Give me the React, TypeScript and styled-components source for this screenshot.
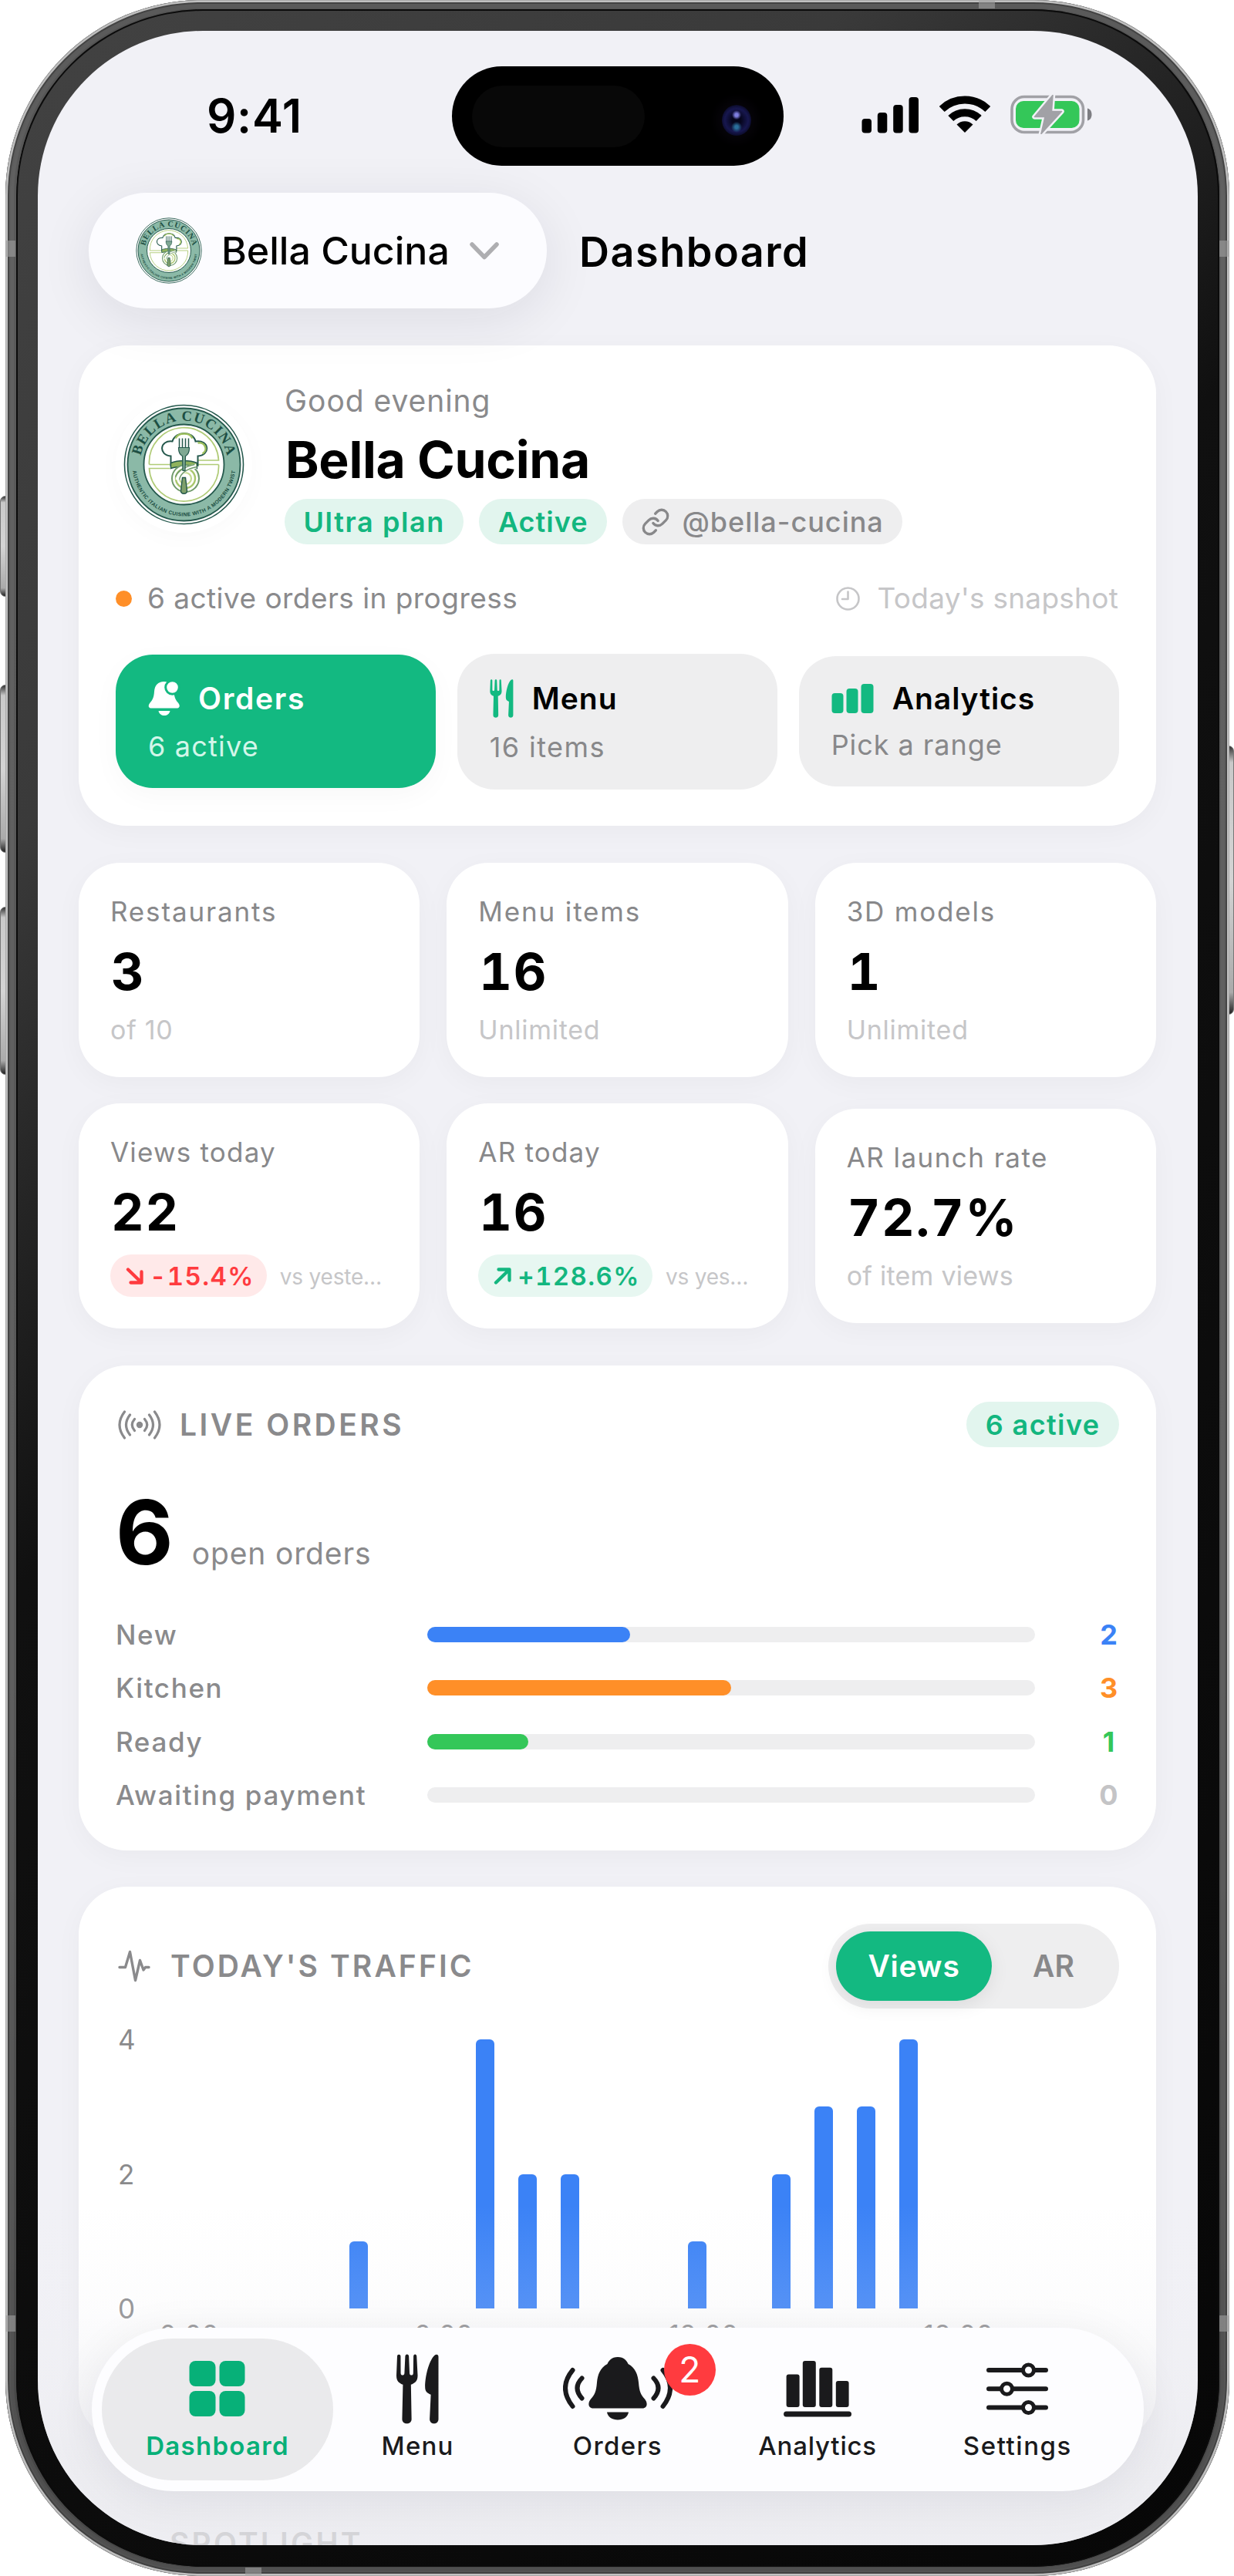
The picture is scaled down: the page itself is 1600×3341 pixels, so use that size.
import { useId } from "react";
import { Link } from "lucide-react";
import styled, { createGlobalStyle, css } from "styled-components";

interface Stat {
  label: string;
  value: string;
  note: string;
  delta?: string;
  up?: boolean;
  labelSpacing?: number;
  noteSpacing?: number;
}

const stats: Stat[] = [
  { label: "Restaurants", value: "3", note: "of 10", labelSpacing: 1.85 },
  { label: "Menu items", value: "16", note: "Unlimited", labelSpacing: 1.85 },
  { label: "3D models", value: "1", note: "Unlimited", labelSpacing: 1.8 },
  { label: "Views today", value: "22", note: "vs yeste…", delta: "-15.4%", labelSpacing: 1.2 },
  { label: "AR today", value: "16", note: "vs yes…", delta: "+128.6%", up: true, labelSpacing: 1.2 },
  { label: "AR launch rate", value: "72.7%", note: "of item views", labelSpacing: 1.45, noteSpacing: 0.25 },
];

const queue = [
  { label: "New", count: 2, color: "#3b82f6" },
  { label: "Kitchen", count: 3, color: "#ff8f28" },
  { label: "Ready", count: 1, color: "#34c759" },
  { label: "Awaiting payment", count: 0, color: "#c4c4c6" },
];

const openOrders = 6;

const hourlyViews = [0, 0, 0, 0, 1, 0, 0, 4, 2, 2, 0, 0, 1, 0, 2, 3, 3, 4, 0, 0, 0, 0];
const hourLabels = ["0:00", "6:00", "12:00", "18:00"];

const App = () => {
  return (
    <>
      <GlobalStyle />
      <Stage>
        <SideButton $top={643} $height={131} />
        <SideButton $top={888} $height={218} />
        <SideButton $top={1176} $height={218} />
        <SideButton $top={967} $height={349} $right />

        <Frame>
          <Bezel>
            <Screen>
              <StatusBar>
                <Clock>9:41</Clock>
                <Island>
                  <Speaker />
                  <Lens />
                </Island>
                <StatusIcons>
                  <SignalIcon />
                  <WifiIcon />
                  <BatteryIcon />
                </StatusIcons>
              </StatusBar>

              <Header>
                <Switcher>
                  <Logo size={86} />
                  <SwitcherName>Bella Cucina</SwitcherName>
                  <svg width="38" height="23" viewBox="0 0 38 23" fill="none">
                    <path d="M3 3l16 16.500L35 3" stroke="#aeaeb1" strokeWidth="5.500" strokeLinecap="round" strokeLinejoin="round" />
                  </svg>
                </Switcher>
                <Title>Dashboard</Title>
              </Header>

              <Content>
                <Hero>
                  <HeroTop>
                    <Avatar>
                      <Logo size={157} />
                    </Avatar>
                    <div>
                      <Greeting>Good evening</Greeting>
                      <Name>Bella Cucina</Name>
                      <Pills>
                        <Pill $spacing={1.6}>Ultra plan</Pill>
                        <Pill $spacing={1}>Active</Pill>
                        <Pill $muted $spacing={1}>
                          <Link size={38} strokeWidth={2.1} />
                          @bella-cucina
                        </Pill>
                      </Pills>
                    </div>
                  </HeroTop>

                  <Snapshot>
                    <Progress>
                      <Dot />6 active orders in progress
                    </Progress>
                    <Today>
                      <svg width="31" height="31" viewBox="0 0 31 31" fill="none" stroke="currentColor" strokeWidth="2.600">
                        <circle cx="15.500" cy="15.500" r="14" />
                        <path d="M15.500 6.500V16H8" strokeLinecap="round" strokeLinejoin="round" />
                      </svg>
                      Today's snapshot
                    </Today>
                  </Snapshot>

                  <Tiles>
                    <Tile $active>
                      <TileHead $height={50} $gap={23} $spacing={1.7}>
                        <BellBadgeIcon />
                        Orders
                      </TileHead>
                      <TileNote $spacing={1.2}>6 active</TileNote>
                    </Tile>
                    <Tile>
                      <TileHead $height={53} $gap={24} $spacing={1}>
                        <CutleryIcon width={31} height={50} />
                        Menu
                      </TileHead>
                      <TileNote $spacing={1.4}>16 items</TileNote>
                    </Tile>
                    <Tile>
                      <TileHead $height={46.5} $gap={24} $spacing={0.95}>
                        <svg width="55" height="38" viewBox="0 0 55 38" fill="currentColor">
                          <rect x="0.500" y="12" width="15" height="26" rx="4" />
                          <rect x="19.500" y="6" width="15" height="32" rx="4" />
                          <rect x="38.500" width="16" height="38" rx="4" />
                        </svg>
                        Analytics
                      </TileHead>
                      <TileNote $spacing={0.95}>Pick a range</TileNote>
                    </Tile>
                  </Tiles>
                </Hero>

                <StatGrid>
                  {stats.map((stat) => (
                    <StatCard key={stat.label} {...stat} />
                  ))}
                </StatGrid>

                <LiveCard>
                  <CardHead>
                    <CardTitle $gap={24} $spacing={3.5}>
                      <BroadcastIcon />
                      LIVE ORDERS
                    </CardTitle>
                    <Pill $spacing={1.4}>6 active</Pill>
                  </CardHead>
                  <Total>
                    <TotalValue>{openOrders}</TotalValue>
                    <TotalLabel>open orders</TotalLabel>
                  </Total>
                  <Queue>
                    {queue.map(({ label, count, color }) => (
                      <QueueRow key={label}>
                        <span>{label}</span>
                        <Track>
                          <Fill style={{ width: `${(count / openOrders) * 100}%`, background: color }} />
                        </Track>
                        <Count $color={color}>{count}</Count>
                      </QueueRow>
                    ))}
                  </Queue>
                </LiveCard>

                <TrafficCard>
                  <CardHead>
                    <CardTitle $gap={26} $spacing={3.1}>
                      <svg width="42" height="42" viewBox="0 0 42 42" fill="none" stroke="currentColor" strokeWidth="3.400" strokeLinecap="round" strokeLinejoin="round">
                        <path d="M2 22.500h7.500L15.500 2.500l7 37 6-26L33 26l2.500-3.500H40" />
                      </svg>
                      TODAY'S TRAFFIC
                    </CardTitle>
                    <Segments>
                      <Segment $active>Views</Segment>
                      <Segment>AR</Segment>
                    </Segments>
                  </CardHead>
                  <Chart>
                    <YAxis>
                      <span>4</span>
                      <span>2</span>
                      <span>0</span>
                    </YAxis>
                    <Plot>
                      {hourlyViews.map((views, hour) => (
                        <Bar key={hour} style={{ height: views * 87.25 }} />
                      ))}
                    </Plot>
                  </Chart>
                  <XAxis>
                    {hourLabels.map((label) => (
                      <span key={label}>{label}</span>
                    ))}
                  </XAxis>
                </TrafficCard>

                <SectionTitle>SPOTLIGHT</SectionTitle>
              </Content>

              <Fade />

              <TabBar>
                <Tab $active>
                  <TabIcon>
                    <svg width="74" height="72" viewBox="0 0 74 72" fill="currentColor">
                      <rect x="0.500" width="34" height="33" rx="8" />
                      <rect x="39.500" width="33" height="33" rx="8" />
                      <rect x="0.500" y="39" width="34" height="33" rx="8" />
                      <rect x="39.500" y="39" width="33" height="33" rx="8" />
                    </svg>
                  </TabIcon>
                  <TabLabel $spacing={1.3}>Dashboard</TabLabel>
                </Tab>
                <Tab>
                  <TabIcon>
                    <CutleryIcon width={55} height={91} />
                  </TabIcon>
                  <TabLabel $spacing={1.2}>Menu</TabLabel>
                </Tab>
                <Tab>
                  <TabIcon>
                    <RingingBellIcon />
                    <Badge>2</Badge>
                  </TabIcon>
                  <TabLabel $spacing={1.4}>Orders</TabLabel>
                </Tab>
                <Tab>
                  <TabIcon>
                    <svg width="88" height="73" viewBox="0 0 88 73" fill="currentColor">
                      <rect x="3.600" y="17.500" width="17" height="42.500" rx="3" />
                      <rect x="24.800" width="17" height="60" rx="3" />
                      <rect x="46.300" y="8.700" width="17" height="51.300" rx="3" />
                      <rect x="67.800" y="26" width="16.800" height="34" rx="3" />
                      <rect y="65.500" width="88" height="7" rx="3.500" />
                    </svg>
                  </TabIcon>
                  <TabLabel $spacing={0.8}>Analytics</TabLabel>
                </Tab>
                <Tab>
                  <TabIcon>
                    <SlidersIcon />
                  </TabIcon>
                  <TabLabel $spacing={1.55}>Settings</TabLabel>
                </Tab>
              </TabBar>
            </Screen>
          </Bezel>
        </Frame>

        <AntennaBand $x={7} $y={312} />
        <AntennaBand $x={1581} $y={312} />
        <AntennaBand $x={7} $y={3003} />
        <AntennaBand $x={1581} $y={3003} />
        <AntennaBand $x={1269} $y={1} $flat />
        <AntennaBand $x={318} $y={3330} $flat />
      </Stage>
    </>
  );
};

const StatCard = ({ label, value, note, delta, up, labelSpacing = 1, noteSpacing = 0.75 }: Stat) => {
  return (
    <StatBox>
      <StatLabel $spacing={labelSpacing}>{label}</StatLabel>
      <StatValue>{value}</StatValue>
      {delta ? (
        <DeltaRow>
          <Delta $up={up}>
            <svg width="23" height="22" viewBox="0 0 23 22" fill="none" stroke="currentColor" strokeWidth="4.300" strokeLinecap="round" strokeLinejoin="round">
              {up ? <path d="M3 19.500L20 3M6.500 2.500H20.500V16.500" /> : <path d="M3 2.500L20 19M20.500 5.500V19.500H6.500" />}
            </svg>
            {delta}
          </Delta>
          <DeltaNote>{note}</DeltaNote>
        </DeltaRow>
      ) : (
        <StatNote $spacing={noteSpacing}>{note}</StatNote>
      )}
    </StatBox>
  );
};

const Logo = ({ size }: { size: number }) => {
  const id = useId();
  return (
    <svg width={size} height={size} viewBox="-78.500 -78.500 157 157" fill="none">
      <defs>
        <path id={`${id}top`} d="M-57 0A57 57 0 0 1 57 0" />
        <path id={`${id}bottom`} d="M-67 0A67 67 0 0 0 67 0" />
      </defs>
      <circle r="77" fill="#fff" stroke="#24584c" strokeWidth="1.600" />
      <circle r="73" fill="#8bb9a7" stroke="#24584c" strokeWidth="1.800" />
      <circle r="52" fill="#fff" stroke="#24584c" strokeWidth="1.800" />
      <g stroke="#b0cb77" strokeWidth="1.700">
        <path d="M-45 0A45 45 0 0 1 45 -5.500H18M-45 0H-18" />
        <path d="M45 0A45 45 0 0 1 -45 5H-18M45 0H18" />
      </g>
      <text fill="#1d4f43" fontFamily="Liberation Serif, serif" fontWeight="700" fontSize="18.500" textAnchor="middle">
        <textPath href={`#${id}top`} startOffset="50%" textLength="156">
          BELLA CUCINA
        </textPath>
      </text>
      <text fill="#1d4f43" fontFamily="Liberation Sans, sans-serif" fontWeight="700" fontSize="6.800" textAnchor="middle">
        <textPath href={`#${id}bottom`} startOffset="50%" textLength="194">
          AUTHENTIC ITALIAN CUISINE WITH A MODERN TWIST
        </textPath>
      </text>
      {/* chef hat */}
      <path
        d="M-17 -11C-33 -12 -32 -32 -15 -30C-11 -44 12 -44 15 -30C33 -33 35 -12 18 -11V1C8 -3 -8 -3 -17 1Z"
        fill="#fff"
        stroke="#24584c"
        strokeWidth="2"
      />
      <path d="M-11 -34C-7 -42 8 -42 11 -34M18 -28C27 -30 32 -19 24 -14" stroke="#9dbf5e" strokeWidth="2.500" />
      <path d="M-17 -2C-8 -6 8 -6 17 -2V5C8 2 -8 2 -17 5Z" fill="#8fb25c" stroke="#24584c" strokeWidth="1.400" />
      {/* pasta twist */}
      <circle cx="2" cy="18" r="17.500" fill="#fff" stroke="#6f9a6a" strokeWidth="2" />
      <circle cx="2" cy="18" r="12.500" stroke="#a8c66c" strokeWidth="2.400" />
      <circle cx="2" cy="18" r="7.500" stroke="#c3d98f" strokeWidth="2.200" />
      <path d="M16 2C4 4 -6 10 -8 20" stroke="#fff" strokeWidth="6" />
      <path d="M17 3C5 5 -5 11 -6 20M14 0C2 2 -8 8 -11 16" stroke="#6f9a6a" strokeWidth="1.500" />
      {/* fork */}
      <path d="M-6 -34V-20M-2 -34V-20M2 -34V-20M6 -34V-20" stroke="#24584c" strokeWidth="1.500" />
      <path d="M-7 -22H7C7 -15 4 -12 2 -11L1.500 8H-1.500L-2 -11C-4 -12 -7 -15 -7 -22Z" fill="#7fa893" stroke="#24584c" strokeWidth="1.200" />
      <path d="M-2 17H2L4 34C4 39 -4 39 -4 34Z" fill="#7fa06b" stroke="#24584c" strokeWidth="1.400" />
    </svg>
  );
};

const SignalIcon = () => (
  <svg width="75" height="48" viewBox="0 0 75 48" fill="#000">
    <rect x="0.500" y="29" width="12.500" height="18.500" rx="4" />
    <rect x="20.800" y="21" width="12.500" height="26.500" rx="4" />
    <rect x="41.200" y="11" width="12.500" height="36.500" rx="4" />
    <rect x="61.500" y="1" width="12.500" height="46.500" rx="4" />
  </svg>
);

const WifiIcon = () => (
  <svg width="66" height="49" viewBox="0 0 66 49" fill="none" stroke="#000" strokeWidth="10">
    <path d="M3.200 17.500A43.200 43.200 0 0 1 62.800 17.500" />
    <path d="M14.800 29.500A26.300 26.300 0 0 1 51.200 29.500" />
    <path d="M33 48L22.500 37.500A15 15 0 0 1 43.500 37.500Z" fill="#000" stroke="none" />
  </svg>
);

const BatteryIcon = () => (
  <svg width="106" height="51" viewBox="0 0 106 51" fill="none">
    <rect x="2" y="2.500" width="92.500" height="46" rx="16" stroke="#a1a1a6" strokeWidth="3.600" />
    <rect x="7" y="8" width="82.500" height="35" rx="10" fill="#34c759" />
    <path d="M100 17.500C104 18.500 105.500 22 105.500 25.500S104 32.500 100 33.500Z" fill="#7d7d82" />
    <path d="M55 0.500L31.500 28.500H45L40 50.500L66.500 21.500H53.500Z" fill="#a1a1a6" stroke="#f1f1f6" strokeWidth="6.500" strokeLinejoin="round" />
    <path d="M55 0.500L31.500 28.500H45L40 50.500L66.500 21.500H53.500Z" fill="#a1a1a6" stroke="#a1a1a6" strokeWidth="1.500" strokeLinejoin="round" />
  </svg>
);

const BellBadgeIcon = () => (
  <svg width="42" height="45" viewBox="0 0 42 45" fill="#fff">
    <path d="M20.500 1C13 1 8.500 6 8 14C7.500 22 5.500 25 2.500 28.500C0 31.500 0 35 3.500 35.500H38C41.500 35 41.500 31.500 39 28.500C36 25 34 22 33.500 14C33 6 28 1 20.500 1Z" />
    <path d="M13.500 39H28.500C27.500 43 24.500 45 21 45S14.500 43 13.500 39Z" />
    <circle cx="31.500" cy="8.500" r="8.800" fill="#fff" stroke="#13b981" strokeWidth="3" />
  </svg>
);

const CutleryIcon = ({ width, height }: { width: number; height: number }) => (
  <svg width={width} height={height} viewBox="0 0 55.500 91.500" fill="currentColor">
    <path d="M3.200 0.500C1.500 0.500 1 2 1 3L0 28C0 36 4 38 8.500 40L7.500 85C7.500 93 19.800 93 19.800 85L19 40C23.500 38 27.800 36 27.800 28L26.500 3C26.500-0.500 22.300-0.500 22.300 3L22 25C22 28.500 17.300 28.500 17.200 25L16.300 3C16.300-0.500 11.500-0.500 11.500 3L10.500 25C10.300 28.500 5.700 28.500 5.600 25L5.500 3C5.500 1.500 5 0.500 3.200 0.500Z" />
    <path d="M55 3.500C55 0 52 0 50 1.500C42 9 37.500 30 37.500 43C37.500 49 40 51 45 53L43.500 85C43.500 93 55 93 55 85Z" />
  </svg>
);

const BroadcastIcon = () => (
  <svg width="56" height="38" viewBox="0 0 56 38" fill="none" stroke="currentColor" strokeWidth="3.200" strokeLinecap="round">
    <circle cx="28" cy="19" r="4.200" fill="currentColor" stroke="none" />
    <path d="M8.500 2Q-4.500 19 8.500 36M15.500 6Q5.500 19 15.500 32M21.500 11.500Q15 19 21.500 26.500" />
    <path d="M47.500 2Q60.500 19 47.500 36M40.500 6Q50.500 19 40.500 32M34.500 11.500Q41 19 34.500 26.500" />
  </svg>
);

const RingingBellIcon = () => (
  <svg width="142" height="82" viewBox="0 0 142 82" fill="currentColor">
    <path d="M71 0C79 0 83 5 84.500 9C94 14 97 23 98 33C99 45 101 49 106 54.500C110.500 60 109 66.500 103 66.500H39C33 66.500 31.500 60 36 54.500C41 49 43 45 44 33C45 23 48 14 57.500 9C59 5 63 0 71 0Z" />
    <path d="M57 71.500H85C84 78 78 81.500 71 81.500S58 78 57 71.500Z" />
    <g fill="none" stroke="currentColor" strokeWidth="6" strokeLinecap="round">
      <path d="M12.500 17Q-6.500 40 12.500 64M24.500 27.500Q12.500 40 24.500 53.500" />
      <path d="M129.500 17Q148.500 40 129.500 64M117.500 27.500Q129.500 40 117.500 53.500" />
    </g>
  </svg>
);

const SlidersIcon = () => (
  <svg width="80" height="68" viewBox="0 0 80 68" fill="#fdfdff" stroke="currentColor" strokeLinecap="round">
    <path d="M3 10H77M3 34.300H77M3 58.500H77" strokeWidth="6" />
    <g strokeWidth="5">
      <circle cx="54.500" cy="10" r="7" />
      <circle cx="26.500" cy="34.300" r="7" />
      <circle cx="54.500" cy="58.500" r="7" />
    </g>
  </svg>
);

const GlobalStyle = createGlobalStyle`
  * {
    box-sizing: border-box;
  }

  body {
    margin: 0;
    background: #fff;
    font-family: Inter, "Liberation Sans", sans-serif;
    color: #000;
  }

  svg {
    display: block;
    flex: none;
  }
`;

const Stage = styled.div`
  position: relative;
  width: 1600px;
  height: 3341px;
  padding: 0 6px 0 7px;
  overflow: hidden;
`;

const SideButton = styled.div<{ $top: number; $height: number; $right?: boolean }>`
  position: absolute;
  top: ${({ $top }) => $top}px;
  ${({ $right }) => ($right ? "right: 0;" : "left: 0;")}
  width: 14px;
  height: ${({ $height }) => $height}px;
  border-radius: 7px;
  background: linear-gradient(#333, #c9c9c9 6%, #d4d4d4 50%, #aaa 92%, #222);
  border: 1px solid #777;
`;

const AntennaBand = styled.div<{ $x: number; $y: number; $flat?: boolean }>`
  position: absolute;
  left: ${({ $x }) => $x}px;
  top: ${({ $y }) => $y}px;
  width: ${({ $flat }) => ($flat ? 21 : 13)}px;
  height: ${({ $flat }) => ($flat ? 10 : 21)}px;
  background: rgba(160, 160, 160, 0.6);
`;

const Frame = styled.div`
  position: relative;
  height: 3341px;
  padding: 12px 13px 12px 14px;
  border-radius: 254px;
  background: linear-gradient(#b4b4b4, #cdcdcd 8%, #c6c6c6 65%, #8e8e8e 96%);
  box-shadow:
    inset 0 0 0 1px rgba(0, 0, 0, 0.12),
    inset 0 0 0 3px rgba(225, 225, 225, 0.8),
    inset 0 0 0 5px rgba(60, 60, 60, 0.75),
    inset 0 0 0 7px rgba(90, 90, 90, 0.45),
    inset 0 0 0 11px rgba(255, 255, 255, 0.05),
    inset 0 0 0 14px rgba(40, 40, 40, 0.7);
`;

const Bezel = styled.div`
  height: 100%;
  padding: 28px;
  border-radius: 242px;
  background: linear-gradient(135deg, #424242, #3a3a3a 22%, #101010 42%, #070707);
  box-shadow: inset 0 0 0 2px #0b0b0b;
`;

const Screen = styled.div`
  position: relative;
  height: 3261px;
  border-radius: 214px;
  overflow: hidden;
  background: #f1f1f6;
`;

const StatusBar = styled.div`
  display: grid;
  grid-template-columns: 537px 430px 1fr;
  align-items: center;
  height: 210px;
  padding: 46px 0 35px;
`;

const Clock = styled.div`
  padding: 0 0 2px 219px;
  font-size: 60px;
  font-weight: 600;
  letter-spacing: 0.7px;
`;

const Island = styled.div`
  display: flex;
  align-items: center;
  justify-content: space-between;
  height: 129px;
  padding: 0 42px 0 26px;
  border-radius: 65px;
  background: #000;
`;

const Speaker = styled.div`
  width: 224px;
  height: 80px;
  border-radius: 40px;
  background: #080808;
`;

const Lens = styled.div`
  width: 38px;
  height: 40px;
  margin-top: 11px;
  border-radius: 50%;
  background:
    radial-gradient(circle at 50% 33%, #7f7fe0 0 2px, transparent 6px),
    radial-gradient(circle at 50% 72%, #2a6f9c 0 2px, transparent 7px),
    radial-gradient(circle, #05051c 20%, #17174f 55%, #0a0a24 75%);
  box-shadow: 0 0 12px 8px #060409;
`;

const StatusIcons = styled.div`
  display: flex;
  align-items: center;
  gap: 26px;
  padding: 0 0 4px 101px;
`;

const Header = styled.header`
  display: flex;
  align-items: center;
  gap: 42px;
  height: 150px;
  margin-left: 66px;
`;

const Switcher = styled.div`
  display: flex;
  align-items: center;
  width: 594px;
  height: 150px;
  padding-left: 61px;
  border-radius: 75px;
  background: #fcfcff;
  box-shadow: 0 14px 70px rgba(20, 20, 40, 0.09);
`;

const SwitcherName = styled.span`
  margin: 0 26px 0 25px;
  font-size: 50px;
  font-weight: 500;
`;

const Title = styled.h1`
  margin: 2px 0 0;
  font-size: 54px;
  font-weight: 600;
  letter-spacing: 1.5px;
`;

const Content = styled.main`
  padding: 48px 54px 0 53px;
`;

const card = css`
  background: #fff;
  box-shadow: 0 8px 36px rgba(20, 20, 40, 0.035);
`;

const Hero = styled.section`
  ${card}
  height: 623px;
  padding: 50px 48px 0 48px;
  border-radius: 62px;
`;

const HeroTop = styled.div`
  display: flex;
  align-items: center;
  gap: 40px;
`;

const Avatar = styled.div`
  display: flex;
  align-items: center;
  justify-content: center;
  width: 177px;
  height: 177px;
  border-radius: 50%;
  background: #fff;
  box-shadow: 0 6px 30px rgba(0, 0, 0, 0.025);
`;

const Greeting = styled.div`
  padding-left: 2px;
  line-height: 44px;
  font-size: 39px;
  letter-spacing: 0.95px;
  color: #8a8a8c;
`;

const Name = styled.h2`
  margin: 14px 0 11px 3px;
  line-height: 80px;
  font-size: 66px;
  font-weight: 700;
  letter-spacing: -0.3px;
`;

const Pills = styled.div`
  display: flex;
  gap: 20px;
  padding-left: 2px;
`;

const Pill = styled.span<{ $muted?: boolean; $spacing: number }>`
  display: flex;
  align-items: center;
  gap: 15px;
  height: 59px;
  padding: 0 24.5px;
  border-radius: 30px;
  font-size: 36px;
  letter-spacing: ${({ $spacing }) => $spacing}px;
  ${({ $muted }) =>
    $muted
      ? "background: #eeeeef; color: #88888a; font-weight: 500;"
      : "background: #e2f5ee; color: #13b67f; font-weight: 600;"}
`;

const Snapshot = styled.div`
  display: flex;
  justify-content: space-between;
  margin: 48px 0 49.5px;
  line-height: 44px;
  font-size: 37px;
`;

const Progress = styled.div`
  display: flex;
  align-items: center;
  letter-spacing: 0.45px;
  color: #8a8a8c;
`;

const Dot = styled.i`
  width: 21px;
  height: 21px;
  margin-right: 20px;
  border-radius: 50%;
  background: #ff8f28;
`;

const Today = styled.div`
  display: flex;
  align-items: center;
  gap: 23px;
  padding-right: 1px;
  letter-spacing: 0.25px;
  color: #c6c6c8;
`;

const Tiles = styled.div`
  display: grid;
  grid-template-columns: repeat(3, 1fr);
  align-items: center;
  gap: 27.5px;
`;

const TileNote = styled.div<{ $spacing: number }>`
  margin-top: 15px;
  line-height: 45px;
  font-size: 36px;
  letter-spacing: ${({ $spacing }) => $spacing}px;
  color: #88888a;
`;

const TileHead = styled.div<{ $height: number; $gap: number; $spacing: number }>`
  display: flex;
  align-items: center;
  gap: ${({ $gap }) => $gap}px;
  height: ${({ $height }) => $height}px;
  font-size: 39px;
  font-weight: 600;
  letter-spacing: ${({ $spacing }) => $spacing}px;

  & > svg {
    color: #13b981;
  }
`;

const Tile = styled.div<{ $active?: boolean }>`
  padding: 31.5px 42px;
  border-radius: 48px;
  background: #eeeeef;

  ${({ $active }) =>
    $active &&
    css`
      background: #13b981;
      color: #fff;
      box-shadow: 0 10px 36px rgba(0, 0, 0, 0.03);

      ${TileNote} {
        color: #d3f6e9;
      }
    `}
`;

const StatGrid = styled.section`
  display: grid;
  grid-template-columns: repeat(3, 1fr);
  align-items: center;
  gap: 34px 35px;
  margin: 48px 0;
`;

const StatBox = styled.div`
  ${card}
  padding: 41px 24px 39px 41px;
  border-radius: 54px;
`;

const StatLabel = styled.div<{ $spacing: number }>`
  line-height: 45px;
  font-size: 35px;
  letter-spacing: ${({ $spacing }) => $spacing}px;
  color: #88888a;
`;

const StatValue = styled.div`
  margin: 15px 0 13px;
  padding-left: 1px;
  line-height: 80px;
  font-size: 66px;
  font-weight: 700;
  font-variant-numeric: tabular-nums;
  letter-spacing: 1.8px;
`;

const StatNote = styled.div<{ $spacing: number }>`
  line-height: 45px;
  font-size: 34px;
  letter-spacing: ${({ $spacing }) => $spacing}px;
  color: #c6c6c8;
`;

const DeltaRow = styled.div`
  display: flex;
  align-items: center;
  gap: 17px;
  padding: 2px 0;
`;

const Delta = styled.span<{ $up?: boolean }>`
  display: flex;
  align-items: center;
  gap: 8px;
  height: 55px;
  padding: 0 16px 0 20px;
  border-radius: 28px;
  font-size: 33px;
  font-weight: 600;
  font-variant-numeric: tabular-nums;
  letter-spacing: 1.4px;
  background: ${({ $up }) => ($up ? "#e7f7f1" : "#ffe9e9")};
  color: ${({ $up }) => ($up ? "#13b67f" : "#ff3b3f")};
`;

const DeltaNote = styled.span`
  padding-top: 2px;
  font-size: 28px;
  letter-spacing: -0.2px;
  white-space: nowrap;
  color: #c6c6c8;
`;

const LiveCard = styled.section`
  ${card}
  height: 629px;
  padding: 47px 48px 0 48px;
  border-radius: 62px;
`;

const CardHead = styled.div`
  display: flex;
  align-items: center;
  justify-content: space-between;
`;

const CardTitle = styled.h3<{ $gap: number; $spacing: number }>`
  display: flex;
  align-items: center;
  gap: ${({ $gap }) => $gap}px;
  margin: 0 0 0 3px;
  font-size: 39px;
  font-weight: 600;
  letter-spacing: ${({ $spacing }) => $spacing}px;
  color: #8a8a8c;
`;

const Total = styled.div`
  display: flex;
  align-items: baseline;
  gap: 24px;
  height: 110px;
  margin: 56px 0 55px;
  line-height: 110px;
`;

const TotalValue = styled.strong`
  font-size: 115px;
  font-weight: 700;
`;

const TotalLabel = styled.span`
  font-size: 39px;
  letter-spacing: 0.85px;
  color: #8a8a8c;
`;

const Queue = styled.div`
  display: grid;
  gap: 25.4px;
`;

const QueueRow = styled.div`
  display: grid;
  grid-template-columns: 404px 788px 1fr;
  align-items: center;
  line-height: 44px;
  font-size: 35px;
  font-weight: 500;
  letter-spacing: 1.65px;
  color: #8a8a8c;
`;

const Track = styled.div`
  height: 20px;
  border-radius: 10px;
  background: #eeeeef;
`;

const Fill = styled.div`
  height: 100%;
  border-radius: 10px;
`;

const Count = styled.span<{ $color: string }>`
  justify-self: end;
  width: 27px;
  text-align: center;
  font-size: 36px;
  font-weight: 700;
  letter-spacing: 0;
  color: ${({ $color }) => $color};
`;

const TrafficCard = styled.section`
  ${card}
  height: 719px;
  margin-top: 47px;
  padding: 47.5px 48px 0 48px;
  border-radius: 62px;
`;

const Segments = styled.div`
  display: flex;
  align-items: center;
  width: 377px;
  height: 110px;
  padding: 0 5px 0 10px;
  border-radius: 55px;
  background: #eeeeef;
`;

const Segment = styled.span<{ $active?: boolean }>`
  flex: 1;
  text-align: center;
  font-size: 39px;
  font-weight: 600;
  color: #88888a;

  ${({ $active }) =>
    $active &&
    css`
      flex: none;
      width: 202px;
      line-height: 90px;
      border-radius: 45px;
      letter-spacing: 0.8px;
      color: #fff;
      background: #13b981;
      box-shadow: 0 6px 24px rgba(0, 0, 0, 0.08);
    `}
`;

const Chart = styled.div`
  display: flex;
  height: 349px;
  margin-top: 40.5px;
`;

const YAxis = styled.div`
  display: flex;
  flex-direction: column;
  justify-content: space-between;
  width: 68px;
  padding-left: 3px;
  font-size: 35px;
  line-height: 0;
  color: #8a8a8c;
`;

const Plot = styled.div`
  display: grid;
  grid-template-columns: repeat(22, 54.85px);
  align-items: end;
  justify-items: center;
`;

const Bar = styled.div`
  width: 24px;
  border-radius: 6px 6px 0 0;
  background: #3b82f6;
`;

const XAxis = styled.div`
  display: grid;
  grid-template-columns: repeat(4, 330px);
  margin: 13px 0 0 57px;
  line-height: 42px;
  font-size: 34px;
  letter-spacing: 0.7px;
  color: #8a8a8c;
`;

const SectionTitle = styled.h3`
  margin: 108px 0 0 118px;
  line-height: 50px;
  font-size: 39px;
  font-weight: 600;
  letter-spacing: 3.2px;
  color: #8a8a8c;
`;

const Fade = styled.div`
  position: absolute;
  left: 0;
  right: 0;
  bottom: 0;
  height: 441px;
  background: linear-gradient(
    rgba(238, 238, 242, 0),
    rgba(238, 238, 242, 0.15) 31%,
    rgba(238, 238, 242, 0.5) 54%,
    rgba(236, 236, 240, 0.76) 77%,
    rgba(236, 236, 240, 0.76)
  );
`;

const TabBar = styled.nav`
  position: absolute;
  left: 70px;
  bottom: 70px;
  display: flex;
  align-items: center;
  width: 1364px;
  height: 212px;
  padding: 0 34px 0 33px;
  border-radius: 106px;
  background: #fdfdff;
  box-shadow: 0 10px 60px rgba(20, 20, 40, 0.07);
`;

const Tab = styled.div<{ $active?: boolean }>`
  display: flex;
  flex: 1;
  flex-direction: column;
  align-items: center;
  color: #1a1a1c;

  ${({ $active }) =>
    $active &&
    css`
      flex: none;
      width: 300px;
      margin: 0 -20px;
      border-radius: 93px;
      background: #eaeaec;
      color: #07b078;
    `}
`;

const TabIcon = styled.div`
  position: relative;
  display: flex;
  align-items: center;
  height: 98px;
  margin-top: 16px;
`;

const TabLabel = styled.span<{ $spacing: number }>`
  height: 70px;
  line-height: 50px;
  font-size: 33px;
  font-weight: 500;
  letter-spacing: ${({ $spacing }) => $spacing}px;

  ${Tab}:first-child & {
    font-weight: 600;
  }
`;

const Badge = styled.span`
  position: absolute;
  top: -9px;
  left: 131px;
  width: 67px;
  height: 67px;
  border-radius: 50%;
  line-height: 67px;
  text-align: center;
  font-size: 46px;
  color: #fff;
  background: #ff3b3f;
`;

export default App;
